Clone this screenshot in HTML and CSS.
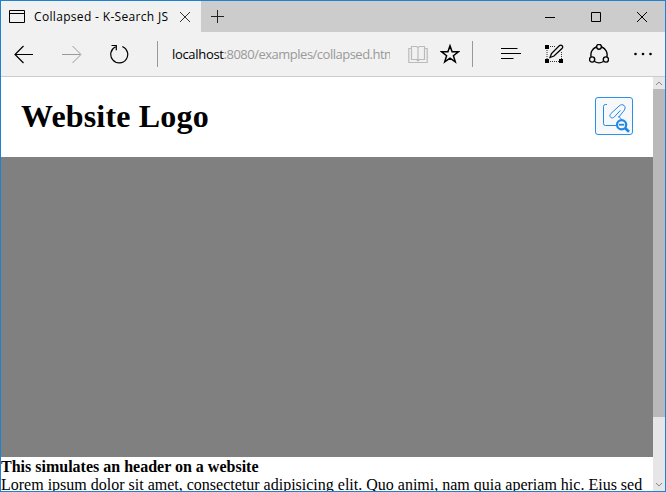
FILE: index.html
```html
<!DOCTYPE html>
<html lang="en">
<head>
<meta charset="utf-8">
<title>Collapsed - K-Search JS</title>
<link rel="stylesheet" href="styles.css">
</head>
<body>
<div class="window">
  <div class="titlebar">
    <div class="tab">
      <svg class="tab-icon" width="16" height="13" viewBox="0 0 16 13"><path d="M.5.5h15v12H.5zM.5 3.5h15"/></svg>
      <span class="tab-title">Collapsed - K-Search JS</span>
      <svg class="tab-close" width="10" height="10" viewBox="0 0 10 10"><path d="M0 0l10 10M10 0L0 10"/></svg>
    </div>
    <svg class="new-tab" width="13" height="13" viewBox="0 0 13 13"><path d="M6.5 0v13M0 6.5h13"/></svg>
    <div class="controls">
      <svg width="10" height="10" viewBox="0 0 10 10"><path d="M0 5.5h10"/></svg>
      <svg width="10" height="10" viewBox="0 0 10 10"><path d="M.5.5h9v9h-9z"/></svg>
      <svg width="10" height="10" viewBox="0 0 10 10"><path d="M0 0l10 10M10 0L0 10"/></svg>
    </div>
  </div>
  <div class="toolbar">
    <svg class="back" width="20" height="20" viewBox="0 0 20 20"><path d="M19 10.5H.8M9.5 2L1 10.5 9.500 19"/></svg>
    <svg class="forward" width="20" height="20" viewBox="0 0 20 20"><path d="M0 10.500h18.200M10.500 2l8.500 8.500-8.500 8.500"/></svg>
    <svg class="refresh" width="20" height="20" viewBox="0 0 20 20"><path d="M6.500 2.800A8.500 8.500 0 1 0 13.300 2.500M2.500 1.500h4.800v4.800"/></svg>
    <span class="divider first"></span>
    <div class="address"><span class="host">localhost</span>:8080/examples/collapsed.htm</div>
    <svg class="book" width="20" height="20" viewBox="0 0 20 20"><path d="M3.500 2.500H8.500L10 3.500L11.500 2.500H16.500V15.500H11.500L10 17L8.500 15.500H3.500zM10 3.500v14M3.500 4.500H.8v14h18.400v-14H16.500"/></svg>
    <svg class="star" width="20" height="20" viewBox="0 0 20 20"><path d="M10 1.800l2.100 6h6.300l-5 3.900 1.900 6.200-5.300-3.700-5.300 3.700 1.900-6.200-5-3.900h6.300z"/></svg>
    <span class="divider second"></span>
    <svg class="hub" width="20" height="20" viewBox="0 0 20 20"><path d="M0 4.500h16.500M0 9.500h20M0 14.500h12.500"/></svg>
    <svg class="note" width="20" height="20" viewBox="0 0 20 20"><path class="dots" d="M6 2.500h6M3 6v9M6 17.500h9M17.500 8v7"/><path class="solid" d="M1 1h4v4H1zM1 15h4v4H1zM15 15h4v4h-4z"/><path d="M6 13.500l1.500-4L15.500 1.600q1.500-1 2.700.2 1 1.200 0 2.400L10 12z"/></svg>
    <svg class="share" width="20" height="20" viewBox="0 0 20 20"><path d="M7.200 3A8.300 8.300 0 0 0 2.200 13M12.800 3a8.300 8.300 0 0 1 5 10M5.600 17.500a8.400 8.400 0 0 0 8.800 0"/><circle cx="10" cy="2.800" r="2.400"/><circle cx="3.100" cy="15.500" r="2.600"/><circle cx="16.900" cy="15.500" r="2.600"/></svg>
    <svg class="more" width="20" height="20" viewBox="0 0 20 20"><circle cx="2.500" cy="10" r="1.300"/><circle cx="10" cy="10" r="1.300"/><circle cx="17.500" cy="10" r="1.300"/></svg>
  </div>
  <div class="viewport">
    <main class="page">
      <header class="site-header">
        <h1>Website Logo</h1>
        <button class="search" aria-label="Search">
          <svg width="36" height="36" viewBox="0 0 36 36"><path d="M11 6.500H9.500Q7.500 6.500 7.500 8.500V25.500Q7.500 27.500 9.500 27.500H20"/><path d="M22.500 19.500L28 12.500C29.500 10.500 29.300 8.700 28.200 7.600C26.700 6.200 24.600 6.500 23 8.100L14.800 15.600C13.500 17 13.700 18.500 14.700 19.400C15.900 20.300 17.300 20 18.400 18.900L24.500 12.300M22.500 18l2.700 3"/><path class="handle" d="M29 30l4 3.700"/><circle cx="25.600" cy="26.700" r="4.600"/><path class="minus" d="M23 26.700h5.200"/></svg>
        </button>
      </header>
      <div class="hero"></div>
      <div class="copy"><strong>This simulates an header on a website</strong><p>Lorem ipsum dolor sit amet, consectetur adipisicing elit. Quo animi, nam quia aperiam hic. Eius sed</p></div>
    </main>
    <div class="scrollbar">
      <svg width="12" height="12" viewBox="0 0 12 12"><path d="M3 8l3-3 3 3"/></svg>
      <div class="thumb"></div>
      <svg class="down" width="12" height="12" viewBox="0 0 12 12"><path d="M3 4l3 3 3-3"/></svg>
    </div>
  </div>
</div>
</body>
</html>
```
FILE: styles.css
```css
* { box-sizing: border-box; }
body { margin: 0; overflow: hidden; }
svg { display: block; flex: none; fill: none; stroke: #000; stroke-width: 1; }

.window {
  width: 666px;
  height: 492px;
  border: 1px solid #1e82d2;
  display: flex;
  flex-direction: column;
  background: #fff;
  overflow: hidden;
}

.titlebar { display: flex; align-items: center; flex: none; height: 31px; background: #ccc; }
.tab { display: flex; align-items: center; width: 200px; height: 31px; padding-left: 8px; background: #f1f1f1; }
.tab-title {
  width: 136px;
  margin-left: 9px;
  font: 12px/18px "Open Sans", sans-serif;
  letter-spacing: 0.33px;
  white-space: nowrap;
}
.tab-close { margin-left: 10px; stroke: #333; }
.new-tab { margin-left: 10px; stroke: #222; }
.controls { display: flex; gap: 36px; margin-left: auto; padding-right: 18px; }

.toolbar { display: flex; align-items: center; flex: none; height: 45px; padding-left: 13px; border-bottom: 1px solid #ccc; background: #f1f1f1; }
.back, .refresh { stroke-width: 1.2; }
.forward { margin-left: 28px; stroke: #999; }
.refresh { margin-left: 27px; }
.divider { flex: none; width: 1px; height: 26px; background: #999; }
.divider.first { margin-left: 28px; }
.divider.second { margin-left: 12px; }
.address {
  flex: none;
  width: 218px;
  margin-left: 14px;
  overflow: hidden;
  white-space: nowrap;
  font: 13px/20px "Open Sans", sans-serif;
  letter-spacing: -0.5px;
  color: #999;
}
.host { color: #000; letter-spacing: -0.32px; }
.book { margin-left: 18px; stroke: #bbb; stroke-width: 1.2; }
.star { margin-left: 12px; stroke-width: 1.5; }
.hub { margin-left: 28px; }
.note { margin-left: 23px; stroke-width: 1.3; }
.note .dots { stroke-dasharray: 1 1; stroke-width: 1; stroke: #333; }
.note .solid { fill: #000; stroke: none; }
.share { margin-left: 25px; stroke-width: 1.4; }
.more { margin-left: 24px; fill: #000; stroke: none; }

.viewport { display: flex; flex: 1; min-height: 0; }
.page { width: 652px; overflow: hidden; font: 16px/18px "Liberation Serif", serif; color: #000; }
.site-header { display: flex; align-items: center; justify-content: space-between; height: 80px; padding: 0 20px 2px; }
.site-header h1 { margin: 0; font-size: 32px; line-height: 36px; letter-spacing: 0.17px; }
.search { width: 38px; height: 38px; padding: 0; border: 1px solid #2a90ea; border-radius: 3px; background: #f7f8fa; }
.search svg { stroke: #2088e5; }
.search circle { stroke-width: 2.2; fill: #f7f8fa; }
.search .handle { stroke-width: 2.8; }
.search .minus { stroke-width: 1.8; }
.hero { height: 300px; background: #808080; }
.copy { padding-top: 1px; }
.copy strong { display: block; }
.copy p { margin: 0; white-space: nowrap; }

.scrollbar { display: flex; flex-direction: column; width: 12px; background: #e6e6e6; }
.scrollbar svg { stroke: #888; }
.thumb { height: 328px; background: #b9b9b9; }
.scrollbar .down { margin-top: auto; }
```
